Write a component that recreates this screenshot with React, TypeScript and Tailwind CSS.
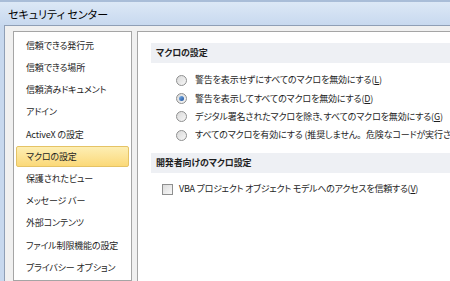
import React from "react";

const navItems = [
  "信頼できる発行元",
  "信頼できる場所",
  "信頼済みドキュメント",
  "アドイン",
  "ActiveX の設定",
  "マクロの設定",
  "保護されたビュー",
  "メッセージ バー",
  "外部コンテンツ",
  "ファイル制限機能の設定",
  "プライバシー オプション",
];

const macroOptions = [
  { label: ["警告を表示せずにすべてのマクロを無効にする"], key: "L", checked: false },
  { label: ["警告を表示してすべてのマクロを無効にする"], key: "D", checked: true },
  { label: ["デジタル署名されたマクロを除き、すべてのマクロを無効にする"], key: "G", checked: false },
  {
    label: ["すべてのマクロを有効にする (推奨しません", "。", "危険なコードが実行される可能性があります)"],
    key: "E",
    checked: false,
  },
];

function Radio({ checked }: { checked: boolean }) {
  return (
    <span className="w-[11px] h-[11px] shrink-0 rounded-full border border-[#8e8f8f] bg-gradient-to-br from-[#d9d9d9] to-[#f7f7f7] flex items-center justify-center">
      {checked && (
        <span className="w-[5px] h-[5px] rounded-full bg-gradient-to-br from-[#7fb4ea] to-[#1b4f9c]" />
      )}
    </span>
  );
}

function SectionHeader({ children }: { children: React.ReactNode }) {
  return (
    <div className="h-[20px] bg-[#eef0f4] flex items-center pl-[5px] font-bold text-[#1e1e1e]">
      {children}
    </div>
  );
}

export default function App() {
  return (
    <div
      className="w-[450px] h-[281px] overflow-hidden flex flex-col bg-[#c7d8ee] text-[9px] tracking-[-0.15px] text-[#1e1e1e] [font-feature-settings:'palt'] border-t-[2px] border-[#a9bdd8]"
      style={{ fontFamily: '"Noto Sans CJK JP", "Noto Sans", sans-serif' }}
    >
      {/* title bar */}
      <div className="h-[23px] shrink-0 flex items-center pl-[8px] pt-[1px] bg-gradient-to-b from-[#dce8f6] to-[#c8d9ef] text-[11px] tracking-normal text-black">
        セキュリティ センター
      </div>

      <div className="flex-1 ml-[4px] border-l border-t border-[#8f9fb6] bg-[#f0f0f0] flex gap-[5px] pl-[8px] pt-[5px] min-h-0">
        {/* left nav */}
        <div className="w-[119px] shrink-0 bg-white border border-[#a5a5a5] pt-[2.5px]">
          {navItems.map((item) => {
            const selected = item === "マクロの設定";
            return (
              <div
                key={item}
                className={
                  selected
                    ? "h-[21px] my-[0.6px] mx-[2px] pl-[9px] flex items-center rounded-[2px] border border-[#e5c365] bg-gradient-to-b from-[#fdeeb3] to-[#fbd978] whitespace-nowrap"
                    : "h-[22.2px] mx-[2px] pl-[10px] flex items-center whitespace-nowrap"
                }
              >
                {item}
              </div>
            );
          })}
        </div>

        {/* right content */}
        <div className="flex-1 bg-white border-t border-l border-[#a5a5a5] pt-[11px] pl-[13px] min-w-0">
          <SectionHeader>マクロの設定</SectionHeader>
          <div className="pt-[8px] pb-[9px]">
            {macroOptions.map((o) => (
              <div key={o.key} className="h-[18.3px] flex items-center pl-[25px] gap-[8px] whitespace-nowrap">
                <Radio checked={o.checked} />
                <span>
                  {o.label.map((part, i) =>
                    part === "。" ? (
                      <span key={i} className="[font-feature-settings:normal]">
                        {part}
                      </span>
                    ) : (
                      <React.Fragment key={i}>{part}</React.Fragment>
                    ),
                  )}
                  (<span className="underline">{o.key}</span>)
                </span>
              </div>
            ))}
          </div>

          <SectionHeader>開発者向けのマクロ設定</SectionHeader>
          <div className="pt-[7px] h-[18px] flex items-center pl-[11px] gap-[6px] whitespace-nowrap box-content">
            <span className="w-[11px] h-[11px] shrink-0 border border-[#8e8f8f] bg-gradient-to-br from-[#dcdcdc] to-[#f8f8f8]" />
            <span className="tracking-[-0.25px]">
              VBA プロジェクト オブジェクト モデルへのアクセスを信頼する(<span className="underline">V</span>)
            </span>
          </div>
        </div>
      </div>
    </div>
  );
}
